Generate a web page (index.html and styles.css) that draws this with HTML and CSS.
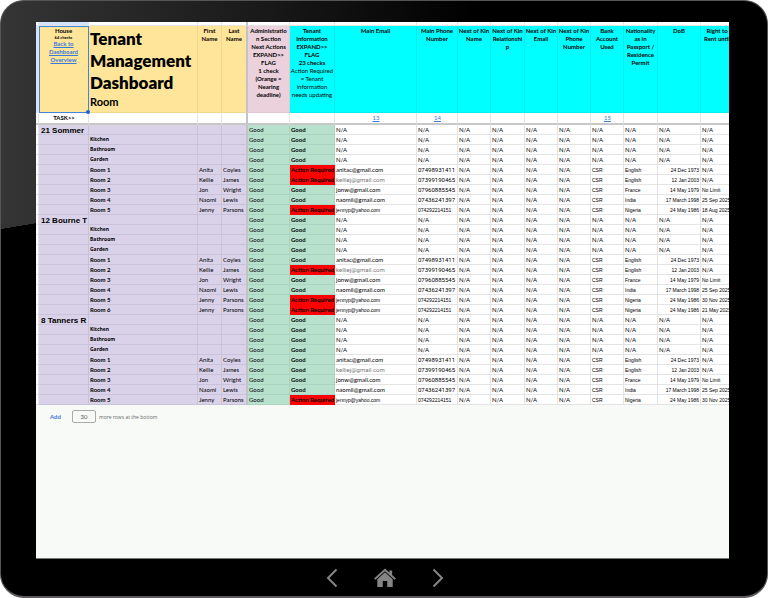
FILE: index.html
```
<!DOCTYPE html>
<html lang="en">
<head>
	<meta charset="UTF-8">
	<meta name="viewport" content="width=device-width, initial-scale=1.0">
	<title>Tenant Management Dashboard</title>
	<link rel="stylesheet" href="styles.css">
</head>
<body>
	<div class="tablet">
		<main class="screen">
			<table class="sheet">
				<colgroup>
					<col class="c-gutter"><col class="c-house"><col class="c-room"><col class="c-first"><col class="c-last">
					<col class="c-admin"><col class="c-info"><col class="c-email"><col class="c-phone">
					<col class="c-kin"><col class="c-wide"><col class="c-kin"><col class="c-kin">
					<col class="c-kin"><col class="c-wide"><col class="c-dob"><col class="c-rent">
				</colgroup>
				<thead>
					<tr class="strip">
						<td></td><td class="picked"></td><td></td><td></td><td class="frozen"></td><td></td><td></td><td></td><td></td>
						<td></td><td></td><td></td><td></td><td></td><td></td><td></td><td></td>
					</tr>
					<tr class="titles">
						<td class="picked"></td>
						<th class="yellow selected">House<small>64 checks</small><a href="#">Back to<br>Dashboard<br>Overview</a></th>
						<th class="yellow title"><h1>Tenant<br>Management<br>Dashboard</h1><span>Room</span></th>
						<th class="yellow">First<br>Name</th>
						<th class="yellow frozen">Last<br>Name</th>
						<th class="pink">Administratio<br>n Section<br>Next Actions<br>EXPAND&gt;&gt;<br>FLAG<br>1 check<br>(Orange =<br>Nearing<br>deadline)</th>
						<th class="cyan">Tenant<br>Information<br>EXPAND&gt;&gt;<br>FLAG<br>23 checks<br><span class="note">Action Required<br>= Tenant<br>information<br>needs updating</span></th>
						<th class="cyan">Main Email</th>
						<th class="cyan">Main Phone<br>Number</th>
						<th class="cyan">Next of Kin<br>Name</th>
						<th class="cyan">Next of Kin<br>Relationshi<br>p</th>
						<th class="cyan">Next of Kin<br>Email</th>
						<th class="cyan">Next of Kin<br>Phone<br>Number</th>
						<th class="cyan">Bank<br>Account<br>Used</th>
						<th class="cyan">Nationality<br>as in<br>Passport /<br>Residence<br>Permit</th>
						<th class="cyan">DoB</th>
						<th class="cyan">Right to<br>Rent until</th>
					</tr>
					<tr class="task">
						<td></td><td class="bold">TASK&gt;&gt;</td><td></td><td></td><td class="frozen"></td><td></td><td></td>
						<td><a href="#">13</a></td><td><a href="#">14</a></td><td></td><td></td><td></td><td></td>
						<td><a href="#">15</a></td><td></td><td></td><td></td>
					</tr>
				</thead>
				<tbody id="rows"></tbody>
			</table>
			<form class="add-rows">
				<button type="button">Add</button>
				<input type="text" id="count" value="30">
				<label for="count">more rows at the bottom</label>
			</form>
		</main>
		<nav class="keys">
			<button type="button" aria-label="Back">
				<svg width="12" height="20" viewBox="0 0 12 20"><path d="M10.500 1.500 2 10l8.500 8.500" fill="none" stroke="#858585" stroke-width="2"/></svg>
			</button>
			<button type="button" aria-label="Home">
				<svg width="22" height="20" viewBox="0 0 20 20" preserveAspectRatio="none" fill="#858585"><path d="M10 .5 14 4.500V2.500h2.500V7l3.500 3.500-1.300 1.300L10 3.300 1.300 11.800 0 10.500Z"/><path d="M10 4.300 17 11.200V19h-5v-6H8v6H3v-7.800Z"/></svg>
			</button>
			<button type="button" aria-label="Forward">
				<svg width="12" height="20" viewBox="0 0 12 20"><path d="M1.500 1.500 10 10l-8.500 8.500" fill="none" stroke="#858585" stroke-width="2"/></svg>
			</button>
		</nav>
	</div>

	<script src="script.js"></script>
</body>
</html>
```

FILE: styles.css
```
* {
	box-sizing: border-box;
}

body {
	margin: 0;
	background: #fff;
	font-family: Lato, "Open Sans", sans-serif;
	font-size: 6px;
	line-height: 8px;
	color: #000;
}

a {
	color: #3c78d8;
}

/* tablet frame */
.tablet {
	display: grid;
	grid-template-rows: 1fr 37px;
	height: 100vh;
	padding: 21px 38px 0 35px;
	border: 1px solid #555;
	border-bottom: 2px solid #5c585c;
	border-radius: 24px;
	background:
		linear-gradient(to bottom right, #333 50%, #000 51%) 0 222px / 36px 6px no-repeat,
		linear-gradient(90deg, #353535, #1a1a1a 33%, #000 62%) 0 0 / 100% 222px no-repeat,
		#000;
	overflow: hidden;
}

.screen {
	min-width: 0;
	min-height: 0;
	overflow: hidden;
	background: #f8faf8;
	border-bottom: 1px solid #777;
}

/* spreadsheet */
.sheet {
	table-layout: fixed;
	width: 698px;
	border-collapse: separate;
	border-spacing: 0;
	background: #fff;
}

.c-gutter { width: 3px; }
.c-house { width: 50px; }
.c-room { width: 109px; }
.c-first { width: 24px; }
.c-last { width: 26px; }
.c-admin { width: 42px; }
.c-info { width: 45px; }
.c-email { width: 82px; }
.c-phone { width: 41px; }
.c-kin { width: 33px; }
.c-wide { width: 34px; }
.c-dob { width: 43px; }
.c-rent { width: 33px; }

.sheet td,
.sheet th {
	padding: 0 0 0 1px;
	border-right: 1px solid #e4e4e4;
	border-bottom: 1px solid #e4e4e4;
	text-align: left;
	white-space: nowrap;
	overflow: hidden;
}

.sheet .frozen {
	border-right: 2px solid #c4c2c6;
}

.strip td {
	height: 4px;
	line-height: 1px;
}

.sheet .picked {
	background: #d3e3fd;
}

.titles {
	height: 87px;
}

.titles th {
	padding: 1px 0 0;
	vertical-align: top;
	text-align: center;
	font-weight: bold;
}

.titles small {
	display: block;
	font-size: 4px;
	line-height: 5px;
}

.titles a {
	font-weight: bold;
}

.yellow {
	background: #ffe599;
}

.pink {
	background: #ead1dc;
}

.cyan {
	background: #0ff;
}

.sheet .yellow {
	border-color: #f0d88f;
}

.sheet .yellow.frozen {
	border-right-color: #c4c2c6;
}

.sheet .pink {
	border-color: #dfc8d2;
}

.sheet .cyan {
	border-color: #0ee;
}

.titles .selected {
	position: relative;
	overflow: visible;
	outline: 1px solid #4285d8;
	outline-offset: -1px;
}

.selected::after {
	content: "";
	position: absolute;
	right: -2px;
	bottom: -2px;
	width: 4px;
	height: 4px;
	border-radius: 50%;
	background: #1a63d8;
}

.titles .title {
	padding: 2px 0 0 1px;
	text-align: left;
	font-size: 11px;
	line-height: 15px;
}

.title h1 {
	margin: 0;
	font-size: 17px;
	font-weight: 800;
	line-height: 22px;
}

.note {
	font-weight: normal;
}

.sheet .task td {
	height: 12px;
	line-height: 10px;
	text-align: center;
	border-bottom: 2px solid #c8c8c8;
}

.bold {
	font-weight: bold;
}

tbody td {
	height: 10px;
	line-height: 9px;
}

.sheet .purple {
	background: #d9d2e9;
	border-color: #c9c3d9;
}

.sheet .purple.frozen {
	border-right-color: #c4c2c6;
}

.sheet .good {
	background: #b7e1cd;
	border-color: #abd4c0;
}

.sheet .action {
	background: #f00;
	border-color: #f00;
	font-weight: bold;
}

.sheet .house {
	padding-left: 2px;
	font-family: "Liberation Sans", sans-serif;
	font-size: 8px;
	font-weight: bold;
	line-height: 7px;
	vertical-align: bottom;
}

.area {
	font-family: "Open Sans", sans-serif;
	font-size: 5px;
	font-weight: bold;
}

.phone {
	font-family: Roboto, sans-serif;
}

.arial {
	font-family: "Liberation Sans", sans-serif;
	font-size: 5px;
	line-height: 7px;
	vertical-align: bottom;
}

.sheet .date {
	padding-right: 1px;
	text-align: right;
}

.grey {
	font-family: Roboto, sans-serif;
	color: #777;
}

/* add rows bar */
.add-rows {
	display: flex;
	align-items: center;
	gap: 3px;
	padding: 5px 14px;
	font-family: "Open Sans", sans-serif;
	font-size: 5px;
	color: #666;
}

.add-rows button {
	width: 19px;
	padding: 0;
	border: 0;
	background: none;
	font: bold 6px Lato, sans-serif;
	text-align: left;
	color: #3c78d8;
}

.add-rows input {
	width: 24px;
	height: 13px;
	padding: 0;
	border: 1px solid #aaa;
	border-radius: 2px;
	background: none;
	font: 6px Lato, sans-serif;
	text-align: center;
	color: #555;
}

/* tablet keys */
.keys {
	display: flex;
	justify-content: center;
	align-items: center;
	gap: 36px;
	padding-left: 5px;
}

.keys button {
	display: flex;
	padding: 0;
	border: 0;
	background: none;
	cursor: pointer;
}
```

FILE: script.js
```
const people = {
	anita: ["Anita", "Coyles", "anitac@gmail.com", "07498931411", "English", "24 Dec 1973", "N/A"],
	kellie: ["Kellie", "James", "kelliej@gmail.com", "07399190465", "English", "12 Jan 2003", "N/A"],
	jon: ["Jon", "Wright", "jonw@gmail.com", "07960885545", "France", "14 May 1979", "No Limit"],
	naomi: ["Naomi", "Lewis", "naomil@gmail.com", "07436241397", "India", "17 March 1998", "25 Sep 2025"],
	jenny: ["Jenny", "Parsons", "jennyp@yahoo.com", "074292214151", "Nigeria", "24 May 1986", ""]
};

// rooms: [person, action required, right to rent date]
const houses = [
	{ name: "21 Sommer", rooms: [["anita", true], ["kellie", true], ["jon"], ["naomi"], ["jenny", true, "18 Aug 2025"]] },
	{ name: "12 Bourne T", rooms: [["anita"], ["kellie", true], ["jon"], ["naomi"], ["jenny", true, "30 Nov 2025"], ["jenny", true, "21 May 2025"]] },
	{ name: "8 Tanners R", rooms: [["anita"], ["kellie"], ["jon"], ["naomi"], ["jenny", true, "30 Nov 2025"]] }
];

function cell(text, cls) {
	return `<td class="${cls || ""}">${text}</td>`;
}

function row(house, room, roomClass, first, last, action, details) {
	return "<tr>" + cell("") +
		cell(house, "purple house") +
		cell(room, "purple " + roomClass) +
		cell(first, "purple") +
		cell(last, "purple frozen") +
		cell("Good", "good") +
		(action ? cell("Action Required", "action") : cell("Good", "good bold")) +
		details + "</tr>";
}

let html = "";
houses.forEach(house => {
	const empty = cell("N/A").repeat(10);
	html += row(house.name, "", "", "", "", false, empty);
	["Kitchen", "Bathroom", "Garden"].forEach(area => {
		html += row("", area, "area", "", "", false, empty);
	});
	house.rooms.forEach(([key, action, until], i) => {
		const [first, last, email, phone, country, dob, rent] = people[key];
		const right = until || rent;
		const details =
			cell(email, key === "kellie" ? "grey" : key === "jenny" ? "arial" : "") +
			cell(phone, key === "jenny" ? "arial" : "phone") +
			cell("N/A").repeat(4) +
			cell("CSR", "arial") +
			cell(country, "arial") +
			cell(dob, "arial date") +
			cell(right, right === "N/A" ? "" : "arial");
		html += row("", "Room " + (i + 1), "bold", first, last, action, details);
	});
});
document.getElementById("rows").innerHTML = html;
```
